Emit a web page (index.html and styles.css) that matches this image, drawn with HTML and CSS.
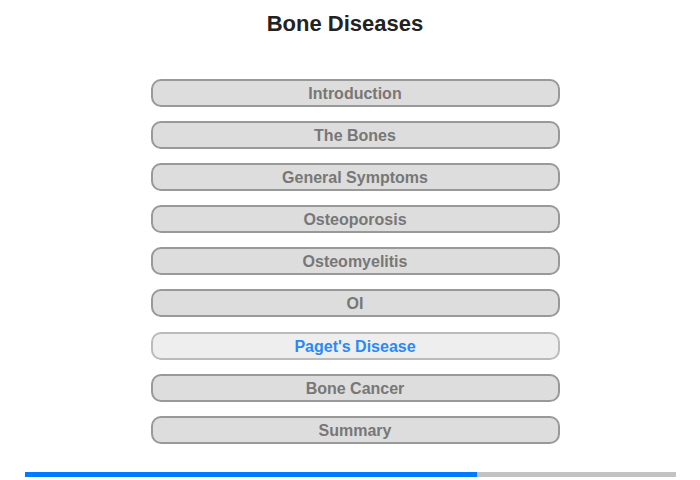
FILE: index.html
```html
<!DOCTYPE html>
<html lang="en">
<head>
    <meta charset="UTF-8">
    <title>Bone Diseases</title>
    <link rel="stylesheet" href="styles.css">
</head>
<body>
    <div class="page">
        <h1 class="title">Bone Diseases</h1>
        <nav class="menu">
            <a class="menu-item">Introduction</a>
            <a class="menu-item">The Bones</a>
            <a class="menu-item">General Symptoms</a>
            <a class="menu-item">Osteoporosis</a>
            <a class="menu-item">Osteomyelitis</a>
            <a class="menu-item">OI</a>
            <a class="menu-item active">Paget's Disease</a>
            <a class="menu-item">Bone Cancer</a>
            <a class="menu-item">Summary</a>
        </nav>
        <div class="progress">
            <div class="progress-fill" style="width: 69.4%;"></div>
        </div>
    </div>
</body>
</html>
```

FILE: styles.css
```css
body {
    font-family: "Liberation Sans", Arial, sans-serif;
    margin: 0;
    padding: 0;
    background: #fff;
}
.page {
    width: 700px;
    height: 480px;
    display: flex;
    flex-direction: column;
    align-items: center;
}
.title {
    margin: 11px 0 0;
    padding-right: 10px;
    font-size: 22px;
    line-height: 25px;
    font-weight: bold;
    color: #222;
}
.menu {
    margin-top: 43px;
    padding-left: 10px;
    display: flex;
    flex-direction: column;
    gap: 14.1px;
}
.menu-item {
    box-sizing: border-box;
    width: 409px;
    height: 28px;
    border: 2px solid #999;
    border-radius: 10px;
    background: #ddd;
    color: #777;
    font-size: 16px;
    font-weight: bold;
    line-height: 25px;
    text-align: center;
    cursor: pointer;
}
.menu-item.active {
    background: #eee;
    border-color: #bbb;
    color: #2a8af5;
}
.progress {
    margin-top: 28px;
    margin-left: 25px;
    align-self: flex-start;
    width: 651px;
    height: 5px;
    background: #c3c3c3;
}
.progress-fill {
    height: 100%;
    background: #007bff;
}
```
